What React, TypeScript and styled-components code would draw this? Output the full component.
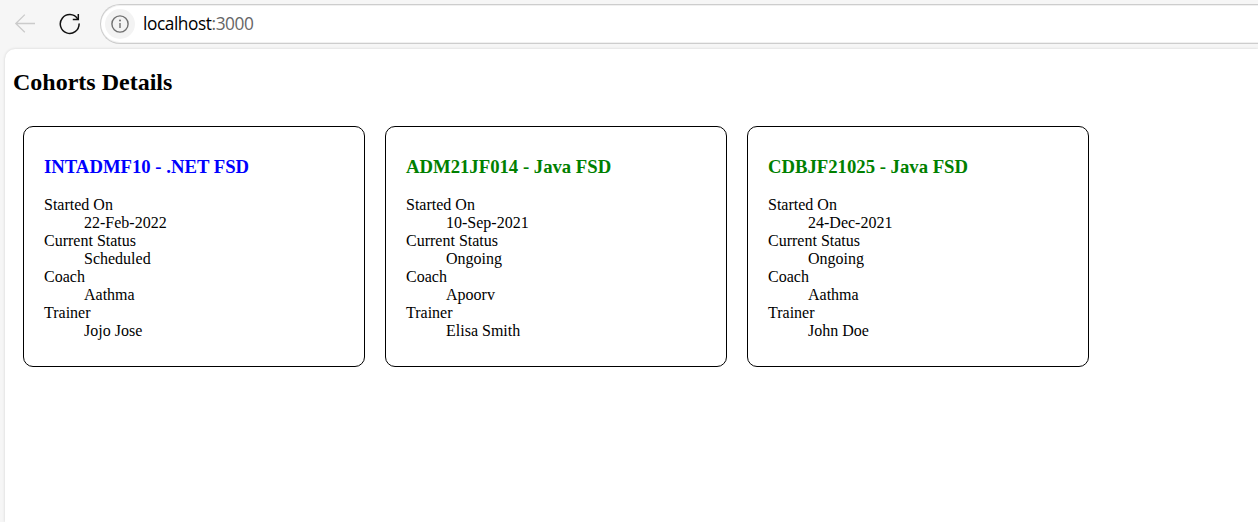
import React from 'react';
import styled, { createGlobalStyle } from 'styled-components';

const GlobalStyle = createGlobalStyle`
  body {
    margin: 0;
    background: #f6f6f6;
    overflow: hidden;
  }
`;

const Browser = styled.div`
  display: flex;
  flex-direction: column;
  height: 100vh;
  overflow: hidden;
`;

const Toolbar = styled.header`
  display: flex;
  align-items: flex-start;
  flex: 0 0 49px;
  box-sizing: border-box;
  padding: 4px 0 0 14px;
`;

const NavIcon = styled.svg`
  flex: none;
  width: 22px;
  height: 22px;
  margin-top: 9px;
  fill: none;
`;

const ReloadIcon = styled(NavIcon)`
  margin-left: 22px;
`;

const AddressBar = styled.div`
  display: flex;
  align-items: center;
  flex: 1;
  height: 40px;
  box-sizing: border-box;
  margin-left: 20px;
  padding-left: 4px;
  border: 1px solid #cdcdcd;
  border-right: 0;
  border-radius: 20px 0 0 20px;
  background: #fff;
  box-shadow: inset 0 1px 0 #f0f0f0, inset 0 -1px 0 #f0f0f0;
`;

const SiteInfo = styled.span`
  display: flex;
  align-items: center;
  justify-content: center;
  width: 30px;
  height: 30px;
  border-radius: 50%;
  background: #f3f3f3;
`;

const Url = styled.span`
  margin-left: 8px;
  font: 17.3px/24px 'Open Sans', sans-serif;
  letter-spacing: -0.43px;
  color: #000;
`;

const Port = styled.span`
  color: #666;
`;

const Page = styled.main`
  flex: 1;
  margin-left: 5px;
  padding: 0 8px;
  border-radius: 10px 0 0 0;
  background: #fff;
  box-shadow: 0 0 3px rgba(0, 0, 0, 0.15);
  font: 16px/18px 'Liberation Serif', 'Times New Roman', serif;
  color: #000;
`;

const PageTitle = styled.h2`
  margin: 20px 0;
  font-size: 24px;
  line-height: 27px;
`;

const CardRow = styled.div`
  display: flex;
`;

const Card = styled.section`
  width: 300px;
  margin: 10px;
  padding: 10px 20px;
  border: 1px solid #000;
  border-radius: 10px;
`;

const CardTitle = styled.h3<{ $ongoing: boolean }>`
  margin: 19px 0;
  font-size: 18.72px;
  line-height: 21px;
  color: ${({ $ongoing }) => ($ongoing ? 'green' : 'blue')};
`;

const Details = styled.dl`
  margin: 16px 0;
`;

const Value = styled.dd`
  margin: 0 0 0 40px;
`;

const cohorts = [
  { title: 'INTADMF10 - .NET FSD', started: '22-Feb-2022', status: 'Scheduled', coach: 'Aathma', trainer: 'Jojo Jose' },
  { title: 'ADM21JF014 - Java FSD', started: '10-Sep-2021', status: 'Ongoing', coach: 'Apoorv', trainer: 'Elisa Smith' },
  { title: 'CDBJF21025 - Java FSD', started: '24-Dec-2021', status: 'Ongoing', coach: 'Aathma', trainer: 'John Doe' },
];

type Cohort = (typeof cohorts)[number];

function CohortCard({ cohort }: { cohort: Cohort }) {
  return (
    <Card>
      <CardTitle $ongoing={cohort.status === 'Ongoing'}>{cohort.title}</CardTitle>
      <Details>
        <dt>Started On</dt>
        <Value>{cohort.started}</Value>
        <dt>Current Status</dt>
        <Value>{cohort.status}</Value>
        <dt>Coach</dt>
        <Value>{cohort.coach}</Value>
        <dt>Trainer</dt>
        <Value>{cohort.trainer}</Value>
      </Details>
    </Card>
  );
}

export default function App() {
  return (
    <Browser>
      <GlobalStyle />
      <Toolbar>
        <NavIcon viewBox="0 0 22 22" stroke="#cbcbcb" strokeWidth="1.3">
          <path d="M21 10.5H1.8M10.8 1.6L1.8 10.5l9 8.7" />
        </NavIcon>
        <ReloadIcon viewBox="0 0 22 22" stroke="#111" strokeWidth="1.5">
          <path d="M19.6 5.9A9.4 9.4 0 1 0 21.1 11" strokeLinecap="round" />
          <path d="M20.3 1V6.4H14.8" />
        </ReloadIcon>
        <AddressBar>
          <SiteInfo>
            <svg width="18" height="18" viewBox="0 0 18 18" fill="none" stroke="#707070" strokeWidth="1.4">
              <circle cx="9" cy="9" r="8.1" />
              <path d="M9 8v5" />
              <circle cx="9" cy="5.6" r="1" fill="#707070" stroke="none" />
            </svg>
          </SiteInfo>
          <Url>
            localhost<Port>:3000</Port>
          </Url>
        </AddressBar>
      </Toolbar>
      <Page>
        <PageTitle>Cohorts Details</PageTitle>
        <CardRow>
          {cohorts.map((cohort) => (
            <CohortCard key={cohort.title} cohort={cohort} />
          ))}
        </CardRow>
      </Page>
    </Browser>
  );
}
